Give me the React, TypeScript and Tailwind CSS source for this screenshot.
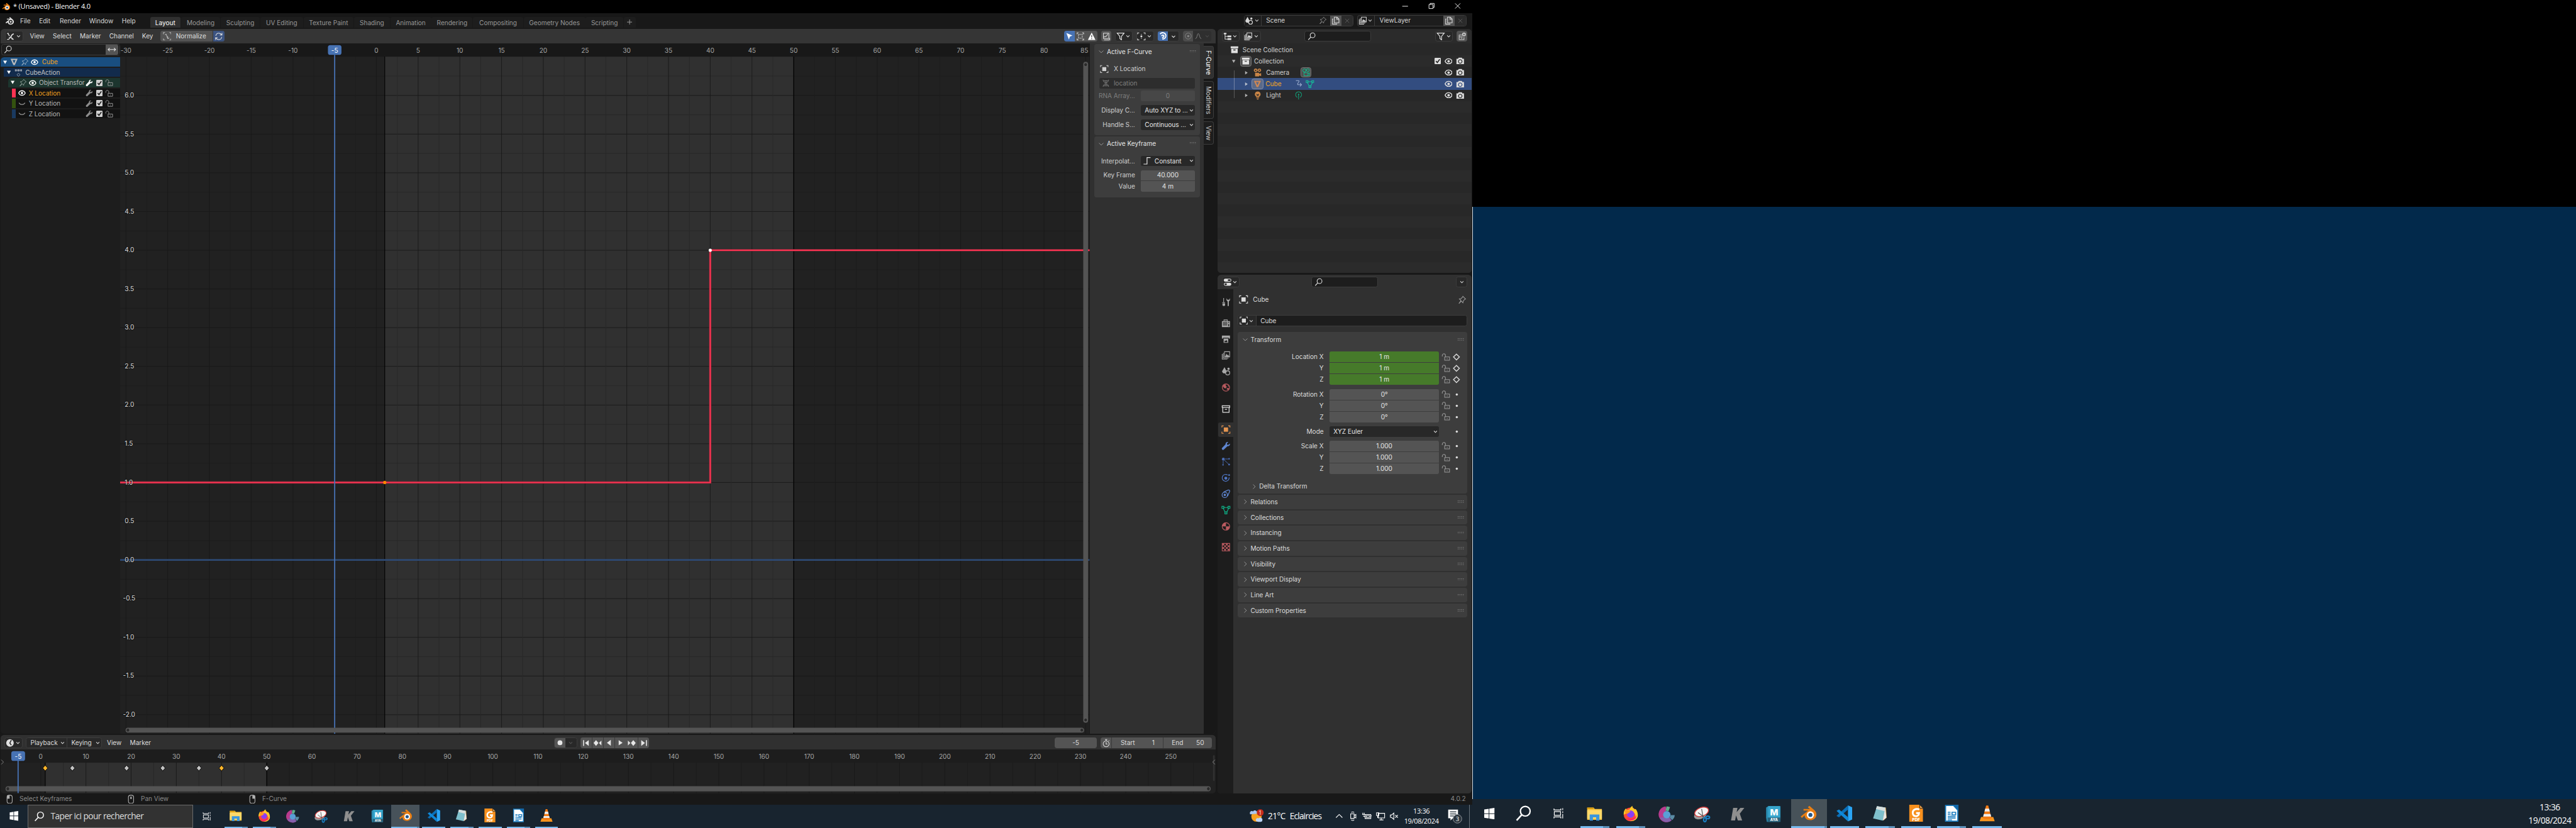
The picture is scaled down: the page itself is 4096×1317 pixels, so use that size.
import React from "react";

type IcProps = { n: string; s?: number; className?: string };

const st = { fill: "none", stroke: "currentColor", strokeWidth: 1.2 } as const;

const ICONS: Record<string, React.ReactNode> = {
  caret: <path d="M4.5 6.5 8 10l3.500-3.500" {...st} strokeWidth={1.5} />,
  caretBig: <path d="M2.500 5.500 8 11l5.500-5.500" {...st} />,
  chevR: <path d="M5.500 2.500 11 8l-5.500 5.500" {...st} />,
  tri: <path d="M2 3h12L8 13z" fill="currentColor" />,
  triR: <path d="M4 2v12l9-6z" fill="currentColor" />,
  triL: <path d="M12 1v14L3 8z" fill="currentColor" />,
  search: <><circle cx="9.500" cy="6" r="4.500" {...st} strokeWidth={1.300} /><path d="M6.300 9.200 1.500 14.500" {...st} strokeWidth={1.500} /></>,
  arrows: <path d="M1 8h14M4 5 1 8l3 3M12 5l3 3-3 3" {...st} />,
  mesh: <path fillRule="evenodd" d="M1 2h14L9.500 14.500h-3zM5 4.500 8 11l3-6.500z" fill="currentColor" />,
  meshData: <><path d="M3.500 3.500h9M3 4.500l4 8M13 4.500l-4 8" {...st} /><path d="M1 1.500h3.500V5H1zM11.500 1.500H15V5h-3.500zM6.200 11h3.600v3.600H6.200z" {...st} /></>,
  pin: <path d="M9.500 1.500l5 5-1.500.5-3 3.500-.5 3-3-3L2 15l4-5.500-3.200-3.200 3.200-.5 3-3z" {...st} />,
  eye: <><path d="M1 8c1.500-3.300 4-5 7-5s5.500 1.700 7 5c-1.500 3.300-4 5-7 5S2.500 11.300 1 8z" {...st} strokeWidth={1.800} /><circle cx="8" cy="8" r="2.500" fill="currentColor" /></>,
  eyeOff: <path d="M1.500 6C4 11 12 11 14.500 6" {...st} strokeWidth={1.500} />,
  action: <><path d="M1 1.500h3.500v4H1zM11.500 1.500H15v4h-3.500zM6 1.500h4v4H6z" fill="currentColor" /><path d="M1 3.500h14" {...st} /><path d="M8 9l3 3.300L8 15.600l-3-3.300z" {...st} /></>,
  wrench: <path d="M14.600 3.800 12 6.200l-2-.4-.4-2L12 1.300C9.500.4 7 2.200 7.300 5.200L1.200 11.500c-1.400 1.800 1 4.600 3 3L10.600 8.500c3 .5 5.200-2 4-4.700z" fill="currentColor" />,
  lock: <><path d="M6 8h9v6H6z" {...st} /><path d="M7.500 8V5.500C7.500 1 1.500 1 1.500 5.500V7" {...st} /><path d="M10 10.500h1.200v1.500H10z" fill="currentColor" /></>,
  fcurve: <><path d="M4.500 11.500c6.500 0 3-8 9.500-8" {...st} strokeWidth={2} /><path d="M3 2.500l3 5M9 10l4 4" {...st} strokeWidth={1.500} /><path d="M1.500 2.500h3M1.500 13.500h4M9.500 12.500l4 1" {...st} strokeWidth={1.600} /></>,
  norm: <><path d="M1 4V1h3M12 1h3v3M15 12v3h-3M4 15H1v-3" {...st} /><path d="M4 5l2-1 3 8 3-1M9 12V8" {...st} /></>,
  sync: <path d="M2.500 7C3 3.500 5.300 2 8 2c2.500 0 4.500 1.500 5.500 3.500M14 1.500v4h-4M13.500 9c-.5 3.500-2.800 5-5.500 5-2.500 0-4.500-1.500-5.500-3.500M2 14.500v-4h4" {...st} />,
  cursor: <path d="M2 2l12 5-5 2-2 6z" fill="currentColor" />,
  selbox: <><path d="M2 4V1.500h2.500M11.500 1.500H14V4M14 12v2.500h-2.500M4.500 14.500H2V12" {...st} /><rect x="4.500" y="4.500" width="7" height="7" strokeDasharray="2 1.200" {...st} /></>,
  warn: <path fillRule="evenodd" d="M8 1l7 13.500H1zM7.200 5.500v4.500h1.600V5.500zm0 6v1.500h1.600v-1.500z" fill="currentColor" />,
  ghost: <><path d="M3 2h10v10H3z" {...st} /><path d="M3 9c4 0 7-2 8-6M4 14.500h10M14.500 11v3.500" {...st} /></>,
  filter: <path d="M1.500 2h13L9.500 8v6.500L6.500 12V8z" {...st} strokeWidth={1.400} />,
  pivot: <><path d="M1 4V1.500h3M12 1.500h3V4M15 12v2.500h-3M4 14.500H1V12" {...st} /><circle cx="8" cy="8" r="1.800" fill="currentColor" /><path d="M8 3.500v1.500M8 11v1.500" {...st} /></>,
  magnet: <path d="M2 4c3.500-5 12-2.500 11.500 4-.5 4-4 6-7 6M5 8c1-3 5-2.500 4.500.5C9 10.500 7.500 11 6 11" {...st} strokeWidth={2.200} />,
  prop: <><circle cx="8" cy="8" r="6" {...st} /><circle cx="8" cy="8" r="2.200" fill="currentColor" /></>,
  bell: <path d="M2 13c4 0 3.500-10 6-10s2 10 6 10" {...st} />,
  object: <><path d="M1 4.500V1.500h3M12 1.500h3v3M15 11.500v3h-3M4 14.500H1v-3" {...st} /><path d="M4.300 4.300h7.400v7.400H4.300z" fill="currentColor" /></>,
  dna: <path d="M2.500 1c0 7 11 7 11 14M13.500 1c0 7-11 7-11 14M4 3h8M4 13h8M6 5.500h4M6 10.500h4" {...st} />,
  constant: <path d="M1.500 14H8V2h6.500" {...st} strokeWidth={1.400} />,
  scene: <><path d="M5.500 1 9 8c1 5-8 5.500-7.500 0z" fill="currentColor" /><circle cx="11" cy="11" r="3.600" {...st} strokeWidth={1.400} /><circle cx="12.500" cy="4" r="2" fill="currentColor" /></>,
  copy: <><path d="M5.500 1.500h5l3.500 3.500v7H5.500z" {...st} strokeWidth={1.300} /><path d="M10 1.500V5.500h4M3.500 5H2v9.500h8V13.500" {...st} strokeWidth={1.300} /></>,
  x: <path d="M3 3l10 10M13 3 3 13" {...st} />,
  layers: <><path d="M5.500 1.500h9v9h-9z" {...st} /><path d="M6.500 10 9 5l1.500 3 1-1.500L14 10z" fill="currentColor" /><path d="M3.500 3.500v9h9M1.500 5.500v9h9" {...st} /></>,
  outliner: <path d="M1 1.500h5v2.500H4v3.500h4V6.500h7V9.500H8v-.8H4V12.500h4v-1h7v3.200H8v-1H2.800V4H1z" fill="currentColor" />,
  newcol: <><path d="M2 5.500h6M2.500 5.500v8.500h9V9.500M2 9h7M6 11.500h2.500" {...st} /><circle cx="11.500" cy="4.500" r="3.500" fill="currentColor" /><path d="M11.500 2.500v4M9.500 4.500h4" stroke="#545454" strokeWidth="1.200" /></>,
  coll: <path fillRule="evenodd" d="M1 2h14v3.500H1zM2 6.500h12V14.500H2zM6 8v1.500h4V8z" fill="currentColor" />,
  collO: <><path d="M1.500 2.500h13v3h-13zM2.500 5.500v8.500h11V5.500M6 9h4" {...st} strokeWidth={1.400} /></>,
  render: <><path fillRule="evenodd" d="M1 4h3l1-2h6l1 2h3v10H1zM8 5a4 4 0 1 0 .01 0z" fill="currentColor" /><circle cx="8" cy="9" r="2.600" fill="currentColor" /></>,
  camera: <><path fillRule="evenodd" d="M5 1a3.200 3.200 0 1 0 .01 0zM5 3a1.200 1.200 0 1 1-.01 0zM11.500 1a3 3 0 1 0 .01 0zM11.500 2.800a1.200 1.200 0 1 1-.01 0z" fill="currentColor" /><path d="M4 8.500h7v2l3.500-1.500v5.500L11 13v1.800H4z" fill="currentColor" /></>,
  cameraO: <><circle cx="4.700" cy="4.700" r="2.900" {...st} /><circle cx="11.200" cy="4" r="2.600" {...st} /><path d="M4 9h7v1.500l3-1.200v5L11 13v1.500H4z" {...st} /></>,
  bulb: <path fillRule="evenodd" d="M8 .5a5.200 5.200 0 0 1 3 9.500v1H5v-1A5.200 5.200 0 0 1 8 .5zM5.500 5l1 3.500h3l1-3.500L8 6.500zM5.500 12h5v1h-5zM6.500 14h3v1.500h-3z" fill="currentColor" />,
  light: <><path d="M5.500 11.500A5.500 5.500 0 1 1 10.500 11.500M8 6v9.500" {...st} /><circle cx="8" cy="6" r="1.200" fill="currentColor" /></>,
  anim: <path d="M3 1.500h5.500c2 2-4 5-2 7.500h7M10.500 6l3 3-3 3" {...st} />,
  propsEd: <><rect x="1" y="1.500" width="14" height="5.500" rx="2.700" fill="currentColor" /><rect x="1" y="9" width="14" height="5.500" rx="2.700" fill="currentColor" /><rect x="8.500" y="2.700" width="5.300" height="3.100" rx="1.500" fill="#282828" /><rect x="2.300" y="10.200" width="4.500" height="3.100" rx="1.500" fill="#282828" /></>,
  tool: <><path d="M4 1v8M1.500 9h5" {...st} /><path d="M2 10.500h4.500V14c-1 1.500-3.500 1.500-4.500 0zM9 1.500v3.500l2 2v8h2V7l2-2V1.500l-1.500 2.500h-3z" fill="currentColor" /></>,
  backR: <path fillRule="evenodd" d="M4 1.500h7V4h4v10.500H1V4h3zM2.500 6h8v1h-8zm0 2.200h8v1h-8zm0 2.200h8v1h-8zM12 5.500v1.500h1.500V5.500zM12 9v4h1.500V9zM5 2.600V4h5V2.600z" fill="currentColor" />,
  output: <path fillRule="evenodd" d="M1 2h14v5h-2V5.800H3V7H1zM4 7h8v7.500H4zM5 13.500h6l-2-4-1.500 2-1-1z" fill="currentColor" />,
  world: <><circle cx="8" cy="8" r="6.300" {...st} strokeWidth={1.400} /><path d="M2.500 5.500c2-3 5-3 6-2.500l-1 2 2 1.500-1.500 3-3-.5zM9 11l2-2.500 2.500 1-1.500 3zM11 3.500l2.500 2.500-1.500.5z" fill="currentColor" /></>,
  particles: <><circle cx="3.500" cy="3.500" r="2.500" fill="currentColor" /><circle cx="3" cy="13.500" r="1.300" fill="currentColor" /><circle cx="13.500" cy="13" r="1.600" fill="currentColor" /><circle cx="13.500" cy="3" r="1.300" fill="currentColor" /><path d="M3.200 6v6M5.500 5.500l7 6.500M6.500 3.300h6" {...st} strokeWidth={1} /></>,
  physics: <><path d="M11 2.800A6 6 0 1 0 13.500 7" {...st} strokeWidth={1.300} /><circle cx="7.800" cy="8.300" r="2.600" fill="currentColor" /><circle cx="13.500" cy="3" r="1.500" fill="currentColor" /></>,
  constraint: <><path d="M4 5l8-3.500c2-.5 3.500 1.500 2 3.500l-3 7" {...st} strokeWidth={1.400} /><circle cx="6" cy="10" r="4.700" {...st} strokeWidth={1.400} /><circle cx="6" cy="10" r="2" fill="currentColor" /></>,
  material: <><circle cx="8" cy="8" r="6.500" {...st} strokeWidth={1.300} /><path d="M8 8V1.500A6.500 6.500 0 0 0 1.500 8zM8 8v6.500A6.500 6.500 0 0 0 14.500 8z" fill="currentColor" /></>,
  texture: <><path d="M1.500 1.500h13v13h-13z" {...st} /><path d="M2 2h3v3H2zM8 2h3v3H8zM5 5h3v3H5zM11 5h3v3h-3zM2 8h3v3H2zM8 8h3v3H8zM5 11h3v3H5zM11 11h3v3h-3z" fill="currentColor" /></>,
  diamond: <path d="M8 2.500 13.500 8 8 13.500 2.500 8z" {...st} strokeWidth={1.600} />,
  dot: <circle cx="8" cy="8" r="2.200" fill="currentColor" />,
  clock: <><circle cx="8" cy="8" r="7" fill="currentColor" /><path d="M10.500 2.500 7.800 8l2.700 4" fill="none" stroke="#282828" strokeWidth="1.800" /></>,
  rec: <circle cx="8" cy="8" r="4.800" fill="currentColor" />,
  first: <path d="M2.500 2.500h1.800v11H2.500zM13 2.500v11L6 8z" fill="currentColor" />,
  last: <path d="M13.500 2.500h-1.800v11h1.800zM3 2.500v11L10 8z" fill="currentColor" />,
  prevK: <path d="M5.500 2.500 10 8l-4.500 5.500L1 8zM15.500 3.500v9L11 8z" fill="currentColor" />,
  nextK: <path d="M10.500 2.500 15 8l-4.500 5.500L6 8zM.5 3.500v9L5 8z" fill="currentColor" />,
  stopwatch: <><circle cx="8" cy="9.500" r="5.500" {...st} /><path d="M8 6v3.800h2.500M6 1.500h4M8 1.500V4M12.500 4l1.500-1" {...st} /></>,
  mouseL: <><rect x="3.500" y="1" width="9" height="14" rx="3.500" {...st} /><path d="M3.500 1H8v6H3.500z" fill="currentColor" /></>,
  mouseM: <><rect x="3.500" y="1" width="9" height="14" rx="3.500" {...st} /><path d="M6.800 3.500h2.400v4H6.800z" fill="currentColor" /></>,
  mouseR: <><rect x="3.500" y="1" width="9" height="14" rx="3.500" {...st} /><path d="M8 1h4.500v6H8z" fill="currentColor" /></>,
  blender: <><path d="M1 10.800 7.500 5.600H3.200V4h5.500L7.300 2.200l1.500-.9 5.200 4.600c3 3.300 1 8.600-4.200 8.600-3 0-5-2-5-4.200L2 12.300z" fill="currentColor" /><circle cx="9.900" cy="9.500" r="3.100" fill="#181818" /><circle cx="9.900" cy="9.500" r="1.600" fill="currentColor" /></>,
};

function Ic({ n, s = 14, className = "" }: IcProps) {
  return (
    <svg viewBox="0 0 16 16" width={s} height={s} className={"shrink-0 " + className}>
      {ICONS[n]}
    </svg>
  );
}

function Check({ className = "" }: { className?: string }) {
  return (
    <svg viewBox="0 0 11 11" width="11" height="11" className={"shrink-0 " + className}>
      <rect width="11" height="11" rx="1.500" fill="currentColor" />
      <path d="M2.500 5.500l2.300 2.700L9 2.500" fill="none" stroke="#1a1a1a" strokeWidth="1.600" />
    </svg>
  );
}

function Grip() {
  return (
    <svg viewBox="0 0 11 4" width="11" height="4" className="shrink-0 text-[#8a8a8a]">
      {[0, 3, 6, 9].map((x) => (
        <g key={x} fill="currentColor">
          <rect x={x} y="0" width="1.200" height="1.200" />
          <rect x={x} y="2.800" width="1.200" height="1.200" />
        </g>
      ))}
    </svg>
  );
}

/* ---------- application icons ---------- */

const BlenderColor = (
  <>
    <path d="M1 16.500 11.500 8.200H5V6h9l-3-2.600 2.200-1.900 7.500 6.600c4.800 5 1.500 13.400-6.500 13.400-4.700 0-7.700-3-7.700-6.800L2.800 18.400z" fill="#ea7f13" />
    <circle cx="14.600" cy="14.200" r="5" fill="#fff" />
    <circle cx="14.600" cy="14.200" r="2.800" fill="#265787" />
  </>
);

const APPS: Record<string, React.ReactNode> = {
  taskview: <g fill="none" stroke="#fff" strokeWidth="1.200"><path d="M5 4v2.500h11V4M5 20v-2.500h11V20M5.500 9h10v6h-10zM19 3.500v3M19 8.500v2.500M19 13v7" /></g>,
  explorer: <><path d="M1.500 4h9l1.500 2h10v15h-20.500z" fill="#f9c440" /><path d="M1.500 4h9v2h-9z" fill="#d99a0b" /><path d="M1.500 7.500H22v12H1.500z" fill="#ffd96a" /><path d="M5 13.500h13.500V22H14v-4.500H9.500V22H5z" fill="#3b96dd" /></>,
  firefox: <><circle cx="12" cy="13.500" r="9.500" fill="#ff4a35" /><path d="M2.500 14c-.5-4 1-7 3-9l1 2.500 4-1c1-2.500 3-4.500 4-5 0 3 2 3.500 3 5l1.500-.5c2 2 3.500 6 3 10-1 5-6 7.500-11 6.500 5-.5 8-4 7.500-8.500-1-4-5-5-8-5z" fill="#ffc928" /><path d="M6 18c2 4.500 10 5 13 1 1-2 1.200-3 1.200-5-2 5-7 7-14.200 4z" fill="#ff1f6b" /><circle cx="12" cy="13" r="5.200" fill="#8b3df5" /><path d="M4 8c3-1.500 6 0 8 1.500-1 1.500-3 1.500-4 3C6.500 13 4 12 4 8z" fill="#ff9a1f" /></>,
  circle: <><path d="M11 1.500A11 11 0 1 0 19 21l-3-4.500-8-3 4-7z" fill="#b83a8e" /><path d="M3 17c3 6.500 11 8 16 4l-3.500-5-6 .5z" fill="#8560ac" /><path d="M12 1.500c2 0 4 .5 5 1l-2 5.500-4-.5z" fill="#5fae8b" /><circle cx="12.500" cy="13" r="5.200" fill="#5a9fd6" /><path d="M18 13.500h5.500c0 3-1.500 5-3.500 7l-3.500-3.500z" fill="#5a8ba5" /></>,
  snip: <><ellipse cx="10" cy="13.500" rx="9" ry="5.500" transform="rotate(-20 10 13)" fill="#9a9a9a" /><ellipse cx="12" cy="9" rx="10" ry="6" transform="rotate(-20 12 9)" fill="#f4f4f4" stroke="#d63a3a" strokeWidth="1.200" /><path d="M7 10l8 6M12 5l2 12" stroke="#555" strokeWidth="1" /><g fill="none" stroke="#1a7fc4" strokeWidth="1.800"><ellipse cx="16.500" cy="20" rx="1.800" ry="2.800" /><ellipse cx="20.500" cy="16.800" rx="2.600" ry="1.800" /></g></>,
  k: <path d="M6 3.500h6l-1.200 6L16 3.500h5.500l-6.300 8 3.300 9.500h-6l-2.500-7L8.700 21H3z" fill="#8f8f8f" />,
  maya: <><path d="M2 3l3-2h17v18l-2 4H3l-1-6z" fill="#2a8fb5" /><path d="M5 1h16v16H5z" fill="#37a5cc" /><path d="M4 17h18v6H4z" fill="#28637c" /><text x="13" y="14" textAnchor="middle" fontFamily="Inter, sans-serif" fontWeight="800" fontSize="12" fill="#fff">M</text><text x="13" y="22" textAnchor="middle" fontFamily="Inter, sans-serif" fontWeight="800" fontSize="5" fill="#fff">AYA</text></>,
  blender: BlenderColor,
  vscode: <><path d="M17 .8 22.800 3.500v17L17 23.200z" fill="#2aa5f5" /><path d="M17 .8v6L4.500 17.500 1 15.500z" fill="#0a6fb8" /><path d="M17 23.200v-6L4.500 6.500 1 8.500z" fill="#0f88d8" /></>,
  notepad: <><path d="M7 2.500 20 4l1 14-4.500 4z" fill="#b98d4a" /><path d="M7.500 2 19 4l-3.500 18L2 19z" fill="#7fc0cd" /><path d="M7.500 2 19 4l-1 5-12-3z" fill="#d6dede" /><path d="M19 4l1.500 14-5 4z" fill="#e9e9e9" /></>,
  foxit: <><path d="M2.500 0h14l5 5v19h-19z" fill="#f7901e" /><path d="M17 0l5 5h-5z" fill="#f9a94d" stroke="#222" strokeWidth=".8" /><path d="M16.500 6.500c-5-2-10 1-9 6 1 4 6 4.500 8 1.500l.5-2.500h-4" fill="none" stroke="#fff" strokeWidth="2.600" /><text x="12" y="22.500" textAnchor="middle" fontFamily="Inter, sans-serif" fontWeight="800" fontSize="5.500" fill="#fff">PDF</text></>,
  libre: <><path d="M4 1h11l6 6.500V23H4z" fill="#fff" stroke="#1a7cc0" strokeWidth="1.600" /><path d="M14 0h8v8z" fill="#1367a8" /><path d="M7 10.500h4M7 13h4M7 16h11M7 18.500h11M7 21h6M13 10.500h5v3.500h-5z" fill="none" stroke="#1a7cc0" strokeWidth="1.500" /></>,
  vlc: <><path d="M3.500 17h17l2 6h-21z" fill="#f7941d" /><path d="M10.500 1h3l4.500 17.500c-2 2-10 2-12 0z" fill="#f47b14" /><path d="M9.300 5.500h5.400l1 4H8.300zM7.300 13h9.400l.9 3.500H6.400z" fill="#eee" /></>,
};

const winLogo = (
  <path d="M0 2.500 7 1.500v7H0zM8 1.300 16 0v8.500H8zM0 9.500h7v7l-7-1zM8 9.500h8V18l-8-1.300z" fill="#fff" />
);

const RUN: { n: string; u: number }[] = [
  { n: "explorer", u: 2 },
  { n: "firefox", u: 2 },
  { n: "circle", u: 0 },
  { n: "snip", u: 0 },
  { n: "k", u: 0 },
  { n: "maya", u: 0 },
  { n: "blender", u: 3 },
  { n: "vscode", u: 1 },
  { n: "notepad", u: 2 },
  { n: "foxit", u: 1 },
  { n: "libre", u: 2 },
  { n: "vlc", u: 1 },
];

function TaskIcons({ big }: { big?: boolean }) {
  return (
    <div className={big ? "ml-[3px] flex h-full" : "ml-[4px] flex h-full"}>
      {RUN.map((a) => (
        <div key={a.n} className={"flex h-full flex-col items-center " + (big ? "w-[62px]" : "w-[49.100px]")}>
          <div className={"flex w-full flex-1 items-center justify-center " + (a.u === 3 ? (big ? "bg-[#475259]" : "bg-[#47525a]") : "")}>
            <svg viewBox="0 0 24 24" width={big ? 30 : 24} height={big ? 30 : 24} className={big ? "mt-[2px]" : ""}>
              {APPS[a.n]}
            </svg>
          </div>
          <div className={"flex " + (big ? "h-[3px] " : "h-[2px] ") + (a.u === 0 ? "hidden" : a.u === 3 ? "w-full" : big ? "w-[51px]" : "w-[40px]")}>
            <div className="h-full flex-1 bg-[#76b9ed]" />
            {a.u >= 2 && <div className={"h-full bg-[#5b8fb8] " + (a.u === 3 ? "w-[4px]" : big ? "w-[11px]" : "w-[9px]")} />}
          </div>
        </div>
      ))}
    </div>
  );
}

/* ---------- top bars ---------- */

function TitleBar() {
  return (
    <div className="flex h-[23px] items-center bg-black text-white">
      <svg viewBox="0 0 24 24" width="15" height="15" className="ml-[3px]">{BlenderColor}</svg>
      <span className="ml-[5px] font-['Open_Sans',sans-serif] text-[12px] tracking-[-0.200px]">* (Unsaved) - Blender 4.0</span>
      <svg viewBox="0 0 110 12" width="110" height="12" className="mt-[-3px] mr-[15px] ml-auto" fill="none" stroke="#fff" strokeWidth="1">
        <path d="M4 6.500h10M50.500 3.500h7v7h-7zM52.500 3.500v-2h7v7h-2M96 1.500l9 9M105 1.500l-9 9" />
      </svg>
    </div>
  );
}

const TABS: [string, string][] = [
  ["Modeling", "w-[68px]"],
  ["Sculpting", "w-[68px]"],
  ["UV Editing", "w-[74px]"],
  ["Texture Paint", "w-[87px]"],
  ["Shading", "w-[62px]"],
  ["Animation", "w-[71px]"],
  ["Rendering", "w-[71px]"],
  ["Compositing", "w-[87px]"],
  ["Geometry Nodes", "w-[107px]"],
  ["Scripting", "w-[65px]"],
];

function TopBar() {
  return (
    <div className="flex h-[27px] bg-[#181818] text-[#d6d6d6]">
      <div className="flex h-full items-center">
        <Ic n="blender" s={16} className="ml-[9px] text-[#e0e0e0]" />
        <span className="ml-[10px] w-[33px]">File</span>
        <span className="w-[36px]">Edit</span>
        <span className="w-[51px]">Render</span>
        <span className="w-[57px]">Window</span>
        <span className="w-[49px]">Help</span>
      </div>
      <div className="mt-[6px] flex h-[19px] gap-px text-[#989898]">
        <div className="flex w-[53px] items-center justify-center rounded-t-[3px] bg-[#303030] pt-[2px] text-white">Layout</div>
        {TABS.map(([t, w]) => (
          <div key={t} className={"flex items-center justify-center rounded-t-[3px] bg-[#1d1d1d] pt-[2px] " + w}>{t}</div>
        ))}
        <div className="flex w-[21px] items-center justify-center rounded-t-[3px] bg-[#1d1d1d]">
          <svg viewBox="0 0 9 9" width="9" height="9"><path d="M4.500 0v9M0 4.500h9" stroke="#a5a5a5" /></svg>
        </div>
      </div>
      <div className="mt-[3px] mr-[9px] ml-auto flex h-[20px] gap-[6px]">
        <div className="flex w-[191px] items-center rounded-[4px] border border-[#3d3d3d] bg-[#1d1d1d]">
          <div className="flex h-full w-[30px] items-center justify-center border-r border-[#3d3d3d] bg-[#1d1d1d]"><Ic n="scene" s={15} /><Ic n="caret" s={12} /></div>
          <span className="ml-[8px]">Scene</span>
          <Ic n="pin" className="mr-[5px] ml-auto text-[#8a8a8a]" />
          <div className="flex h-full w-[20px] items-center justify-center bg-[#545454]"><Ic n="copy" s={15} /></div>
          <div className="flex h-full w-[20px] items-center justify-center rounded-r-[3px] bg-[#2b2b2b]"><Ic n="x" s={11} className="text-[#666]" /></div>
        </div>
        <div className="flex w-[191px] items-center rounded-[4px] border border-[#3d3d3d] bg-[#1d1d1d]">
          <div className="flex h-full w-[30px] items-center justify-center border-r border-[#3d3d3d]"><Ic n="layers" s={15} /><Ic n="caret" s={12} /></div>
          <span className="ml-[8px]">ViewLayer</span>
          <div className="ml-auto flex h-full w-[20px] items-center justify-center bg-[#545454]"><Ic n="copy" s={15} /></div>
          <div className="flex h-full w-[20px] items-center justify-center rounded-r-[3px] bg-[#2b2b2b]"><Ic n="x" s={11} className="text-[#666]" /></div>
        </div>
      </div>
    </div>
  );
}

/* ---------- graph editor ---------- */

function EdType({ n, className = "" }: { n: string; className?: string }) {
  return (
    <div className={"flex w-[31px] items-center justify-center rounded-[4px] border border-[#3d3d3d] bg-[#282828] text-[#e0e0e0] " + className}>
      <Ic n={n} s={15} />
      <Ic n="caret" s={12} />
    </div>
  );
}

function GraphHeader() {
  return (
    <div className="flex h-[25px] items-center bg-[#353535] pt-px text-[#dedede]">
      <EdType n="fcurve" className="ml-[8px] h-[19px]" />
      <span className="ml-[12px] w-[40px]">View</span>
      <span className="w-[47px]">Select</span>
      <span className="w-[51px]">Marker</span>
      <span className="w-[57px]">Channel</span>
      <span className="w-[32px]">Key</span>
      <div className="flex h-[18px] w-[111px] overflow-hidden rounded-[4px] bg-[#545454]">
        <div className="flex flex-1 items-center"><Ic n="norm" s={15} className="ml-[4px] text-[#bbb]" /><span className="ml-[8px]">Normalize</span></div>
        <div className="flex w-[20px] items-center justify-center border-l border-[#353535] bg-[#3c5482]"><Ic n="sync" s={15} /></div>
      </div>
      <div className="mr-[7px] ml-auto flex h-[18px] gap-[6px]">
        <div className="mr-px flex w-[58px] gap-px overflow-hidden rounded-[4px] bg-[#3d3d3d]">
          <div className="flex flex-1 items-center justify-center bg-[#4772b3] text-white"><Ic n="cursor" /></div>
          <div className="flex flex-1 items-center justify-center bg-[#545454]"><Ic n="selbox" s={15} /></div>
          <div className="flex flex-1 items-center justify-center bg-[#545454] text-white"><Ic n="warn" s={15} /></div>
        </div>
        <div className="flex w-[18px] items-center justify-center rounded-[4px] bg-[#545454]"><Ic n="ghost" s={15} /></div>
        <EdType n="filter" />
        <EdType n="pivot" />
        <div className="flex w-[38px] overflow-hidden rounded-[4px] border border-[#3d3d3d] bg-[#282828]">
          <div className="flex w-[17px] items-center justify-center bg-[#4772b3] text-white"><Ic n="magnet" /></div>
          <div className="flex flex-1 items-center justify-center"><Ic n="caret" s={13} /></div>
        </div>
        <div className="flex w-[50px] overflow-hidden rounded-[4px] bg-[#2f2f2f] text-[#858585]">
          <div className="flex w-[18px] items-center justify-center bg-[#4c4c4c]"><Ic n="prop" /></div>
          <div className="flex flex-1 items-center justify-around"><Ic n="bell" /><Ic n="caret" s={12} className="text-[#4a4a4a]" /></div>
        </div>
      </div>
    </div>
  );
}

function RowTools({ white }: { white?: boolean }) {
  return (
    <div className="ml-auto flex items-center pr-[12px] text-[#a9a9a9]">
      <Ic n="wrench" s={13} className={white ? "text-white" : "text-[#8c8c8c]"} />
      <Check className="ml-[5px] text-[#cfcfcf]" />
      <Ic n="lock" s={14} className="ml-[5px] text-[#9a9a9a]" />
    </div>
  );
}

function Channels() {
  const loc = [
    { t: "X Location", bar: "bg-[#ff3352]", eye: true },
    { t: "Y Location", bar: "bg-[#34520f]", eye: false },
    { t: "Z Location", bar: "bg-[#1a3a60]", eye: false },
  ];
  return (
    <div className="w-[208px] shrink-0 bg-[#1d1d1d] pt-[2px]">
      <div className="ml-px flex h-[19px] rounded-[4px] border border-[#3d3d3d]">
        <Ic n="search" s={15} className="mt-[1px] ml-[4px] text-[#dedede]" />
        <div className="ml-auto flex w-[22px] items-center justify-center rounded-r-[3px] bg-[#545454]"><Ic n="arrows" s={15} className="text-[#e6e6e6]" /></div>
        <div className="w-[2px] bg-[#1d1d1d]" />
      </div>
      <div className="mt-[4px] flex flex-col gap-[2px]">
        <div className="flex h-[16px] items-center rounded-tl-[6px] bg-[#194e80] text-[#f0a020]">
          <Ic n="tri" s={9} className="ml-[3px] text-white" />
          <Ic n="mesh" s={14} className="ml-[5px] text-[#bcbcbc]" />
          <Ic n="pin" s={14} className="ml-[4px] text-[#9fb3c6]" />
          <Ic n="eye" s={13} className="ml-[4px] text-white" />
          <span className="ml-[6px]">Cube</span>
        </div>
        <div className="ml-[6px] flex h-[16px] items-center bg-[#122b4c] text-[#c2c2c2]">
          <Ic n="tri" s={9} className="ml-[4px] text-white" />
          <Ic n="action" s={14} className="ml-[5px] text-[#8f9aa8]" />
          <span className="ml-[5px]">CubeAction</span>
        </div>
        <div className="ml-[13px] flex h-[16px] items-center rounded-tl-[6px] bg-[#1c352e] text-[#b5b5b5]">
          <Ic n="tri" s={9} className="ml-[3px] text-white" />
          <Ic n="pin" s={14} className="ml-[7px] text-[#92a49d]" />
          <Ic n="eye" s={13} className="ml-[3px] text-white" />
          <span className="ml-[5px] tracking-[-0.100px]">Object Transfor</span>
          <RowTools white />
        </div>
        {loc.map((l) => (
          <div key={l.t} className="ml-[20px] flex h-[16px] items-center bg-[#121212]">
            <div className={"h-full w-[6px] " + l.bar} />
            <Ic n={l.eye ? "eye" : "eyeOff"} s={13} className={"ml-[5px] " + (l.eye ? "text-white" : "text-[#9a9a9a]")} />
            <span className={"ml-[5px] " + (l.eye ? "text-[#f0a020]" : "text-[#b5b5b5]")}>{l.t}</span>
            <RowTools />
          </div>
        ))}
      </div>
    </div>
  );
}

const fx = (f: number) => 654.7 + f * 14.515;
const vy = (v: number) => 973.6 - v * 134.68;

function GraphPlot() {
  const major: number[] = [];
  for (let f = -30; f <= 85; f += 5) major.push(f);
  const vals: number[] = [];
  for (let v = 6; v >= -2; v -= 0.5) vals.push(v);
  const line = (f: number, minor: boolean) => {
    const inside = f > 1 && f < 50;
    return inside ? (minor ? "#282828" : "#191919") : minor ? "#1e1e1e" : "#191919";
  };
  return (
    <svg viewBox="209 75 1686 1201" width="1686" height="1201" className="shrink-0 font-['Inter',sans-serif] text-[11px]">
      <rect x="209" y="75" width="1686" height="1201" fill="#212121" />
      <rect x={fx(1)} y="98" width={fx(50) - fx(1)} height="1178" fill="#303030" />
      {vals.map((v) => (
        <g key={v}>
          <path d={`M209 ${vy(v + 0.25)}H${fx(1)}M${fx(50)} ${vy(v + 0.25)}H1895`} stroke="#1e1e1e" />
          <path d={`M${fx(1)} ${vy(v + 0.25)}H${fx(50)}`} stroke="#282828" />
          <path d={`M209 ${vy(v)}H1895`} stroke="#191919" />
        </g>
      ))}
      {major.map((f) => (
        <g key={f}>
          <path d={`M${fx(f)} 98V1276`} stroke={line(f, false)} />
          <path d={`M${fx(f + 2.5)} 98V1276`} stroke={line(f + 2.5, true)} />
        </g>
      ))}
      <path d={`M${fx(1)} 98V1276M${fx(50)} 98V1276`} stroke="#000" strokeWidth="1.200" />
      <path d={`M209 ${vy(0)}H1895`} stroke="#2d4973" strokeWidth="3" />
      <path d={`M209 ${vy(1)}H${fx(40)}V${vy(4)}H1895`} fill="none" stroke="#7e2a38" strokeWidth="4" />
      <path d={`M209 ${vy(1)}H${fx(40)}V${vy(4)}H1895`} fill="none" stroke="#ff3352" strokeWidth="2.300" />
      <circle cx={fx(1)} cy={vy(1)} r="2.800" fill="#ff8500" />
      <circle cx={fx(40)} cy={vy(4)} r="2.800" fill="#fff" />
      <rect x="209" y="75" width="1686" height="23" fill="#181818" />
      <g fill="#a6a6a6" textAnchor="middle">
        {major.filter((f) => f !== -5).map((f) => (
          <text key={f} x={f === 85 ? 1886 : fx(f)} y="91">{f}</text>
        ))}
      </g>
      <path d={`M${fx(-5)} 95V1276`} stroke="#4772b3" strokeWidth="2" />
      <rect x={fx(-5) - 11.7} y="78" width="23.500" height="17" rx="4" fill="#4772b3" />
      <text x={fx(-5)} y="91" fill="#fff" textAnchor="middle">-5</text>
      <g fill="#dcdcdc" className="[text-shadow:0_0_2px_#000]">
        {vals.map((v) => (
          <text key={v} x={v < 0 ? 214 : 217} y={vy(v) + 3.5}>{v.toFixed(1)}</text>
        ))}
      </g>
      <rect x="1884" y="107" width="8.500" height="1150" rx="4.200" fill="#545454" />
      <ellipse cx="1888.200" cy="112" rx="3" ry="3.200" fill="#2a2a2a" stroke="#6a6a6a" strokeWidth=".8" />
      <ellipse cx="1888.200" cy="1252" rx="3" ry="3.200" fill="#2a2a2a" stroke="#6a6a6a" strokeWidth=".8" />
      <rect x="218.500" y="1265.500" width="1667" height="8.500" rx="4.200" fill="#545454" />
      <ellipse cx="222.500" cy="1269.700" rx="3" ry="3.200" fill="#2a2a2a" stroke="#6a6a6a" strokeWidth=".8" />
      <ellipse cx="1881.500" cy="1269.700" rx="3" ry="3.200" fill="#2a2a2a" stroke="#6a6a6a" strokeWidth=".8" />
    </svg>
  );
}

function PanelHead({ t }: { t: string }) {
  return (
    <div className="flex h-[26px] items-center pr-[7px]">
      <Ic n="caretBig" s={11} className="ml-[7px] text-[#b0b0b0]" />
      <span className="ml-[4px] text-[#e6e6e6]">{t}</span>
      <div className="mb-[2px] ml-auto"><Grip /></div>
    </div>
  );
}

function Sidebar() {
  return (
    <div className="flex w-[219px] shrink-0 bg-[#303030] text-[#cfcfcf]">
      <div className="flex w-[199px] flex-col gap-[2px] pt-[2px] pr-[7px] pl-[8px]">
        <div className="h-[158px] rounded-[4px] bg-[#3d3d3d]">
          <PanelHead t="Active F-Curve" />
          <div className="mt-[8px] flex h-[18px] items-center"><Ic n="object" s={15} className="ml-[10px]" /><span className="ml-[9px]">X Location</span></div>
          <div className="mt-[7px] mr-[9px] ml-[9px] flex h-[18px] items-center rounded-[3px] bg-[#2d2d2d] text-[#7f7f7f]"><Ic n="dna" s={14} className="ml-[4px]" /><span className="ml-[7px]">location</span></div>
          <div className="mt-[4px] mr-[9px] flex h-[18px] items-center text-[#7f7f7f]"><span className="w-[71px] text-right">RNA Array...</span><div className="ml-[10px] flex h-full flex-1 items-center justify-center rounded-[3px] bg-[#474747]">0</div></div>
          <div className="mt-[7px] mr-[9px] flex h-[18px] items-center"><span className="w-[71px] text-right">Display C...</span><div className="ml-[10px] flex h-full flex-1 items-center rounded-[3px] bg-[#282828] pl-[7px] text-[#e6e6e6]">Auto XYZ to ...<Ic n="caret" s={12} className="ml-auto" /></div></div>
          <div className="mt-[7px] mr-[9px] flex h-[18px] items-center"><span className="w-[71px] text-right">Handle S...</span><div className="ml-[10px] flex h-full flex-1 items-center rounded-[3px] bg-[#282828] pl-[7px] text-[#e6e6e6]">Continuous ...<Ic n="caret" s={12} className="ml-auto" /></div></div>
        </div>
        <div className="h-[106px] rounded-[4px] bg-[#3d3d3d]">
          <PanelHead t="Active Keyframe" />
          <div className="mt-[8px] mr-[9px] flex h-[18px] items-center"><span className="w-[71px] text-right">Interpolat...</span><div className="ml-[10px] flex h-full flex-1 items-center rounded-[3px] bg-[#282828] pl-[3px] text-[#e6e6e6]"><Ic n="constant" s={15} /><span className="ml-[6px]">Constant</span><Ic n="caret" s={12} className="ml-auto" /></div></div>
          <div className="mt-[7px] mr-[9px] flex h-[18px] items-center"><span className="w-[71px] text-right">Key Frame</span><div className="ml-[10px] flex h-full flex-1 items-center justify-center rounded-t-[3px] bg-[#545454] text-[#e6e6e6]">40.000</div></div>
          <div className="mt-px mr-[9px] flex h-[19px] items-center"><span className="w-[71px] text-right">Value</span><div className="ml-[10px] flex h-full flex-1 items-center justify-center rounded-b-[3px] bg-[#545454] text-[#e6e6e6]">4 m</div></div>
        </div>
      </div>
      <div className="w-[20px] bg-[#181818] pt-[5px]">
        <div className="flex h-[57px] w-[17px] items-center justify-center rounded-r-[4px] border border-l-0 border-[#3d3d3d] bg-[#303030] text-white [writing-mode:vertical-rl]">F-Curve</div>
        <div className="mt-[4px] flex h-[66px] w-[17px] items-center justify-center rounded-r-[4px] border border-l-0 border-[#3d3d3d] bg-[#1d1d1d] [writing-mode:vertical-rl]">Modifiers</div>
        <div className="mt-[4px] flex h-[41px] w-[17px] items-center justify-center rounded-r-[4px] border border-l-0 border-[#3d3d3d] bg-[#1d1d1d] [writing-mode:vertical-rl]">View</div>
      </div>
    </div>
  );
}

/* ---------- timeline ---------- */

const tx = (f: number) => 70.7 + f * 7.862;

function Timeline() {
  const tens: number[] = [];
  for (let f = 0; f <= 250; f += 10) tens.push(f);
  const keys: [number, boolean][] = [[1, true], [7, false], [19, false], [27, false], [35, false], [40, true], [50, false]];
  return (
    <div className="h-[101px] overflow-hidden rounded-[6px] bg-[#212121]">
      <div className="flex h-[25px] items-center bg-[#303030] pt-[2px] text-[#dedede]">
        <EdType n="clock" className="ml-[7px] h-[19px]" />
        <div className="ml-[6px] flex h-[19px] w-[132px] rounded-[4px] border border-[#3d3d3d] bg-[#282828]">
          <div className="flex w-[71px] items-center border-r border-[#3d3d3d] pl-[7px]">Playback<Ic n="caret" s={12} className="mr-px ml-auto" /></div>
          <div className="flex flex-1 items-center pl-[7px]">Keying<Ic n="caret" s={12} className="ml-auto" /></div>
        </div>
        <span className="ml-[9px] w-[40px]">View</span>
        <span className="w-[738px]">Marker</span>
        <div className="flex h-[19px] w-[40px] overflow-hidden rounded-[4px] border border-[#3d3d3d] bg-[#282828]">
          <div className="flex w-[18px] items-center justify-center bg-[#545454] text-[#e6e6e6]"><Ic n="rec" /></div>
          <div className="flex flex-1 items-center justify-center text-[#555]"><Ic n="caret" s={12} /></div>
        </div>
        <div className="ml-[6px] flex h-[19px] w-[119px] gap-px overflow-hidden rounded-[4px] bg-[#3a3a3a] text-[#e6e6e6]">
          {["first", "prevK", "triL", "triR", "nextK", "last"].map((n) => (
            <div key={n} className="flex flex-1 items-center justify-center bg-[#545454]"><Ic n={n} s={n.startsWith("tri") ? 12 : 15} /></div>
          ))}
        </div>
        <div className="ml-auto flex h-[19px] w-[74px] items-center justify-center rounded-[4px] bg-[#545454]">-5</div>
        <div className="mr-[6px] ml-[6px] flex h-[19px] w-[194px] gap-px overflow-hidden rounded-[4px] bg-[#3a3a3a]">
          <div className="flex w-[19px] items-center justify-center bg-[#545454]"><Ic n="stopwatch" s={15} /></div>
          <div className="flex w-[88px] items-center justify-between bg-[#545454] pr-[14px] pl-[15px]"><span>Start</span><span>1</span></div>
          <div className="flex flex-1 items-center justify-between bg-[#545454] pr-[14px] pl-[15px]"><span>End</span><span>50</span></div>
        </div>
      </div>
      <svg viewBox="1 1304 2113 76" width="2113" height="76" className="font-['Inter',sans-serif] text-[11px]">
        <rect x="1" y="1304" width="2113" height="76" fill="#212121" />
        <rect x={tx(1)} y="1327" width={tx(50) - tx(1)} height="53" fill="#303030" />
        {tens.map((f) => (
          <g key={f}>
            <path d={`M${tx(f)} 1327V1380`} stroke="#191919" />
            <path d={`M${tx(f + 5)} 1327V1380`} stroke={f < 50 ? "#272727" : "#1d1d1d"} />
          </g>
        ))}
        <path d={`M${tx(1)} 1327V1380M${tx(50)} 1327V1380`} stroke="#000" strokeWidth="1.200" />
        <rect x="1" y="1304" width="2113" height="23" fill="#1d1d1d" />
        <g fill="#a6a6a6" textAnchor="middle">
          {tens.map((f) => <text key={f} x={tx(f)} y="1320">{f}</text>)}
        </g>
        {keys.map(([f, sel]) => (
          <path key={f} d={`M${tx(f)} 1331.500l4.300 5-4.300 5-4.300-5z`} fill={sel ? "#ffb72b" : "#c4c4c4"} stroke="#000" strokeWidth="1" />
        ))}
        <rect x="9.500" y="1368" width="2096" height="9" rx="4.500" fill="#545454" />
        <ellipse cx="13.500" cy="1372.500" rx="3" ry="3.400" fill="#2a2a2a" stroke="#6a6a6a" strokeWidth=".8" />
        <ellipse cx="2101.500" cy="1372.500" rx="3" ry="3.400" fill="#2a2a2a" stroke="#6a6a6a" strokeWidth=".8" />
        <path d={`M${tx(-5)} 1322V1380`} stroke="#4772b3" strokeWidth="2" />
        <rect x="19.500" y="1307" width="24" height="17" rx="4" fill="#4772b3" />
        <text x="31.500" y="1320" fill="#fff" textAnchor="middle">-5</text>
        <rect x="2109.500" y="1314" width="3" height="45" rx="1.500" fill="#303030" />
        <path d="M2113 1322l-4 4 4 4M2 1322l4 4-4 4" fill="none" stroke="#8a8a8a" />
      </svg>
    </div>
  );
}

/* ---------- outliner ---------- */

function Outliner() {
  const vis = (check?: boolean) => (
    <div className="ml-auto flex items-center gap-[6px] pr-[12px] text-[#dcdcdc]">
      {check && <Check className="text-[#dcdcdc]" />}
      <Ic n="eye" s={14} />
      <Ic n="render" s={15} />
    </div>
  );
  const filler = Array.from({ length: 15 }, (_, i) => i);
  return (
    <div className="h-[425px] overflow-hidden rounded-[6px] bg-[#282828] text-[#cfcfcf]">
      <div className="flex h-[26px] items-center bg-[#2b2b2b]">
        <EdType n="outliner" className="ml-[8px] h-[19px]" />
        <EdType n="layers" className="ml-[6px] h-[19px]" />
        <div className="ml-[76px] flex h-[19px] w-[115px] items-center rounded-[4px] border border-[#3d3d3d] bg-[#1d1d1d]"><Ic n="search" s={15} className="ml-[4px] text-[#dedede]" /></div>
        <EdType n="filter" className="ml-auto h-[19px]" />
        <div className="mr-[7px] ml-[6px] flex h-[19px] w-[19px] items-center justify-center rounded-[4px] bg-[#545454]"><Ic n="newcol" s={15} /></div>
      </div>
      <div className="flex h-[20px] items-center bg-[#282828] pt-px"><Ic n="coll" s={15} className="ml-[22px] text-[#e0e0e0]" /><span className="ml-[7px]">Scene Collection</span></div>
      <div className="flex h-[20px] items-center bg-[#2b2b2b] pt-px">
        <Ic n="tri" s={8} className="ml-[25px] text-[#b0b0b0]" />
        <div className="ml-[7px] flex h-[18px] w-[20px] items-center justify-center rounded-[4px] border border-[#777] bg-[#4f4f4f]"><Ic n="coll" s={15} className="text-[#e6e6e6]" /></div>
        <span className="ml-[4px]">Collection</span>
        {vis(true)}
      </div>
      <div className="flex h-[20px] items-center bg-[#282828]">
        <div className="mt-[6px] ml-[29px] h-[14px] w-px bg-[#5a5a5a]" />
        <Ic n="triR" s={8} className="ml-[16px] text-[#b0b0b0]" />
        <Ic n="camera" s={16} className="ml-[8px] text-[#c98546]" />
        <span className="ml-[7px] w-[60px]">Camera</span>
        <div className="flex h-[18px] w-[19px] items-center justify-center rounded-[4px] border border-[#777] bg-[#4f4f4f]"><Ic n="cameraO" s={15} className="text-[#15b58a]" /></div>
        {vis()}
      </div>
      <div className="flex h-[20px] items-center bg-[#334d80]">
        <div className="ml-[29px] h-full w-px bg-[#7483a5]" />
        <Ic n="triR" s={8} className="ml-[16px] text-[#b8bfcc]" />
        <div className="ml-[6px] flex h-[18px] w-[20px] items-center justify-center rounded-[4px] border border-[#8490ab] bg-[#5c6a88]"><Ic n="mesh" s={14} className="text-[#cf8754]" /></div>
        <span className="ml-[4px] w-[50px] text-[#f5a623]">Cube</span>
        <Ic n="anim" s={15} className="text-[#9fb0d0]" />
        <Ic n="meshData" s={15} className="ml-[5px] text-[#15c39a]" />
        {vis()}
      </div>
      <div className="flex h-[20px] items-center bg-[#282828]">
        <div className="mb-[5px] ml-[29px] h-[15px] w-px bg-[#5a5a5a]" />
        <Ic n="triR" s={8} className="ml-[16px] text-[#b0b0b0]" />
        <Ic n="bulb" s={15} className="ml-[9px] text-[#c98546]" />
        <span className="ml-[7px] w-[49px]">Light</span>
        <Ic n="light" s={15} className="text-[#12a37c]" />
        {vis()}
      </div>
      {filler.map((i) => (
        <div key={i} className={"h-[20px] " + (i % 2 ? "bg-[#282828]" : "bg-[#2b2b2b]")} />
      ))}
    </div>
  );
}

/* ---------- properties ---------- */

const PTABS: { n: string; c: string }[][] = [
  [{ n: "tool", c: "text-[#a8a8a8]" }],
  [
    { n: "backR", c: "text-[#a8a8a8]" },
    { n: "output", c: "text-[#a8a8a8]" },
    { n: "layers", c: "text-[#a8a8a8]" },
    { n: "scene", c: "text-[#a8a8a8]" },
    { n: "world", c: "text-[#b95a5f]" },
  ],
  [{ n: "collO", c: "text-[#dcdcdc]" }],
  [
    { n: "object", c: "text-[#e59550]" },
    { n: "wrench", c: "text-[#5f86d0]" },
    { n: "particles", c: "text-[#4a6cb5]" },
    { n: "physics", c: "text-[#4f76c4]" },
    { n: "constraint", c: "text-[#5f86d0]" },
    { n: "meshData", c: "text-[#0db58a]" },
    { n: "material", c: "text-[#b95a5f]" },
  ],
  [{ n: "texture", c: "text-[#b95a5f]" }],
];

const FIELDS: { labels: string[]; v: string; green?: boolean }[] = [
  { labels: ["Location X", "Y", "Z"], v: "1 m", green: true },
  { labels: ["Rotation X", "Y", "Z"], v: "0°" },
  { labels: ["Scale X", "Y", "Z"], v: "1.000" },
];

function FieldGroup({ g }: { g: (typeof FIELDS)[number] }) {
  return (
    <div className="flex flex-col gap-[0.900px]">
      {g.labels.map((l, i) => (
        <div key={l} className="flex h-[18.900px] items-center">
          <span className="w-[149px] text-right">{l}</span>
          <div className={"ml-[10px] flex h-full w-[191px] items-center justify-center text-[#e6e6e6] " + (g.green ? "bg-[#467a2a] " : "bg-[#545454] ") + (i === 0 ? "rounded-t-[3px]" : i === 2 ? "rounded-b-[3px]" : "")}>{g.v}</div>
          <Ic n="lock" s={15} className="ml-[4px] text-[#9a9a9a]" />
          <Ic n={g.green ? "diamond" : "dot"} s={g.green ? 15 : 14} className={g.green ? "ml-[4px] text-[#dcdcdc]" : "ml-[5px] text-[#dcdcdc]"} />
        </div>
      ))}
    </div>
  );
}

function Properties() {
  return (
    <div className="h-[902px] overflow-hidden rounded-[6px] bg-[#303030] text-[#dcdcdc]">
      <div className="flex h-[25.500px] items-center">
        <EdType n="propsEd" className="ml-[8px] h-[19px]" />
        <div className="ml-[125px] flex h-[19px] w-[115px] items-center rounded-[4px] border border-[#3d3d3d] bg-[#1d1d1d]"><Ic n="search" s={15} className="ml-[4px] text-[#dedede]" /></div>
        <div className="mr-[7px] ml-auto flex h-[19px] w-[20px] items-center justify-center rounded-[4px] border border-[#3d3d3d] bg-[#282828]"><Ic n="caret" s={12} /></div>
      </div>
      <div className="flex h-[877px]">
        <div className="flex w-[28px] flex-col gap-[10.700px] bg-[#1d1d1d] pt-[9px] pl-[2px]">
          {PTABS.map((grp, gi) => (
            <div key={gi} className="flex flex-col gap-[2px]">
              {grp.map((t) => (
                <div key={t.n} className={"flex h-[26px] items-center justify-center rounded-l-[3px] " + (t.n === "object" ? "bg-[#303030] " : "") + t.c}>
                  <Ic n={t.n} s={16} />
                </div>
              ))}
            </div>
          ))}
        </div>
        <div className="flex-1 pr-[7px] pl-[8px]">
          <div className="flex h-[36px] items-center"><Ic n="object" s={16} className="ml-[2px]" /><span className="ml-[8px]">Cube</span><Ic n="pin" s={15} className="mr-[2px] ml-auto text-[#9a9a9a]" /></div>
          <div className="mt-[9px] flex h-[19px] rounded-[4px] border border-[#3d3d3d] bg-[#1d1d1d]">
            <div className="flex w-[31px] items-center justify-center rounded-l-[3px] border-r border-[#3d3d3d] bg-[#282828]"><Ic n="object" s={15} /><Ic n="caret" s={12} /></div>
            <span className="ml-[7px] flex items-center">Cube</span>
          </div>
          <div className="mt-[10.500px] h-[280.500px] rounded-[4px] bg-[#3d3d3d]">
            <div className="flex h-[26px] items-center pr-[6px]"><Ic n="caretBig" s={11} className="ml-[7px] text-[#b0b0b0]" /><span className="ml-[4px]">Transform</span><div className="ml-auto"><Grip /></div></div>
            <div className="mt-[7.500px] flex flex-col gap-[6.700px]">
              <FieldGroup g={FIELDS[0]} />
              <FieldGroup g={FIELDS[1]} />
              <div className="flex h-[18px] items-center">
                <span className="w-[149px] text-right">Mode</span>
                <div className="ml-[10px] flex h-full w-[191px] items-center rounded-[3px] bg-[#282828] pl-[7px] text-[#e6e6e6]">XYZ Euler<Ic n="caret" s={12} className="ml-auto" /></div>
                <Ic n="dot" s={14} className="ml-[24px]" />
              </div>
              <FieldGroup g={FIELDS[2]} />
            </div>
            <div className="mt-[12.500px] flex h-[18px] items-center"><Ic n="chevR" s={11} className="ml-[22px] text-[#b0b0b0]" /><span className="ml-[4px]">Delta Transform</span></div>
          </div>
          {["Relations", "Collections", "Instancing", "Motion Paths", "Visibility", "Viewport Display", "Line Art", "Custom Properties"].map((t) => (
            <div key={t} className="mt-[2.500px] flex h-[24.500px] items-center rounded-[4px] bg-[#3d3d3d] pr-[6px]">
              <Ic n="chevR" s={11} className="ml-[7px] text-[#b0b0b0]" />
              <span className="ml-[4px]">{t}</span>
              <div className="ml-auto"><Grip /></div>
            </div>
          ))}
        </div>
      </div>
    </div>
  );
}

/* ---------- status + taskbars ---------- */

function StatusBar() {
  return (
    <div className="flex h-[20px] items-center bg-[#181818] text-[#8a8a8a]">
      <div className="flex w-[211px] items-center pl-[9px]"><Ic n="mouseL" s={16} className="text-[#b0b0b0]" /><span className="ml-[9px]">Select Keyframes</span></div>
      <div className="flex w-[211px] items-center pl-[9px]"><Ic n="mouseM" s={16} className="text-[#b0b0b0]" /><span className="ml-[9px]">Pan View</span></div>
      <div className="flex items-center pl-[9px]"><Ic n="mouseR" s={16} className="text-[#b0b0b0]" /><span className="ml-[9px]">F-Curve</span></div>
      <span className="mr-[11px] ml-auto">4.0.2</span>
    </div>
  );
}

function TaskbarMain() {
  return (
    <div className="flex h-[40px] bg-[#18242f] font-['Open_Sans',sans-serif] text-white">
      <div className="flex w-[48px] items-center justify-center"><svg viewBox="0 0 16 18" width="16" height="17">{winLogo}</svg></div>
      <div className="flex w-[288px] items-center border border-[#6b6b6b] bg-[#323232] text-[15px] tracking-[-0.600px] text-[#dedede]">
        <Ic n="search" s={19} className="ml-[10px] text-white" />
        <span className="ml-[10px]">Taper ici pour rechercher</span>
      </div>
      <div className="flex w-[46px] items-center justify-center"><svg viewBox="0 0 24 24" width="21" height="21">{APPS.taskview}</svg></div>
      <TaskIcons />
      <div className="ml-auto flex items-center">
        <svg viewBox="0 0 26 24" width="26" height="24" className="mr-[7px]">
          <circle cx="13" cy="13" r="9" fill="#f7a01f" />
          <path d="M2 9c-2-5 3-7 5-5 2-4 9-1 7 4z" fill="#a9c6f0" />
          <path d="M12 20c-1-4 3-5 5-4 2-3 8 0 6 4 1 3-10 3-11 0z" fill="#bcd4f7" />
          <circle cx="19.500" cy="6" r="6" fill="#c42b1c" />
          <text x="19.500" y="9.300" textAnchor="middle" fontSize="9" fill="#fff">1</text>
        </svg>
        <span className="w-[38px] text-[15px] tracking-[-0.700px]">21°C</span>
        <span className="w-[79px] text-[15px] tracking-[-0.900px]">Eclaircies</span>
        <svg viewBox="0 0 110 18" width="110" height="18" fill="none" stroke="#fff" strokeWidth="1.200">
          <path d="M1.500 11.500 7 6l5.500 5.500" />
          <path d="M27 5h6v8h-6zM33 8l3-2v6l-3-2M28 2.500c1-1.200 4-1.200 5 0M28 15.500c1 1.200 4 1.200 5 0" />
          <path d="M52 6h10v7H52zM54 8h6v3h-6zM48 3v3M50.500 3v3M47 6h5v2c0 2-3 2-3 0M62 8.500h1.500" />
          <path d="M75 4h11v8H75zM80 12v3M77 15.500h7M72 3h4v5h-4zM74 8v4" />
          <path d="M96 7v4h2l4 3.500v-11L98 7zM104.500 7l4.500 4.500M109 7l-4.500 4.500" />
        </svg>
        <div className="ml-[8px] flex w-[64px] flex-col items-center text-[12px] leading-[18px] tracking-[-0.350px]"><span>13:36</span><span>19/08/2024</span></div>
        <svg viewBox="0 0 28 28" width="28" height="28" className="ml-[12px]">
          <path d="M3 3h17v15h-9l-4 4v-4H3z" fill="#fff" />
          <path d="M6 7h11M6 10.500h11M6 14h7" stroke="#18242f" strokeWidth="1.400" />
          <circle cx="19" cy="19" r="7.500" fill="#2b343c" stroke="#9aa0a5" />
          <text x="19" y="22.800" textAnchor="middle" fontSize="10.500" fill="#fff">3</text>
        </svg>
        <div className="ml-[11px] h-[40px] w-px bg-[#6a737b]" />
        <div className="w-[4px]" />
      </div>
    </div>
  );
}

function RightMonitor() {
  return (
    <div className="flex w-[1920px] flex-col">
      <div className="h-[360px] bg-black" />
      <div className="h-[1030px] border-l border-[#d5dde5] bg-[#02294b]" />
      <div className="flex h-[50px] bg-[#18242f] font-['Open_Sans',sans-serif] text-white">
        <div className="flex w-[60px] items-center justify-center"><svg viewBox="0 0 16 18" width="20" height="20">{winLogo}</svg></div>
        <div className="flex w-[60px] items-center justify-center"><Ic n="search" s={30} /></div>
        <div className="flex w-[60px] items-center justify-center"><svg viewBox="0 0 24 24" width="26" height="26">{APPS.taskview}</svg></div>
        <TaskIcons big />
        <div className="mr-[7px] ml-auto flex w-[77px] flex-col items-center justify-center text-[15px] leading-[23px] tracking-[-0.500px]"><span>13:36</span><span>19/08/2024</span></div>
      </div>
    </div>
  );
}

export default function App() {
  return (
    <div className="h-[1317px] w-[4096px] overflow-hidden bg-[#18242f]">
      <div className="flex h-[1440px] w-[4480px] overflow-hidden font-['Inter',sans-serif] text-[11px] leading-[14px] whitespace-nowrap [zoom:0.9142857]">
        <div className="flex w-[2560px] flex-col">
          <TitleBar />
          <TopBar />
          <div className="flex h-[1330px] gap-[3px] bg-[#181818] pl-px">
            <div className="flex w-[2113px] flex-col gap-[3px]">
              <div className="h-[1226px] overflow-hidden rounded-[6px]">
                <GraphHeader />
                <div className="flex h-[1201px]">
                  <Channels />
                  <GraphPlot />
                  <Sidebar />
                </div>
              </div>
              <Timeline />
            </div>
            <div className="flex w-[442px] flex-col gap-[3px]">
              <Outliner />
              <Properties />
            </div>
          </div>
          <StatusBar />
          <TaskbarMain />
        </div>
        <RightMonitor />
      </div>
    </div>
  );
}
